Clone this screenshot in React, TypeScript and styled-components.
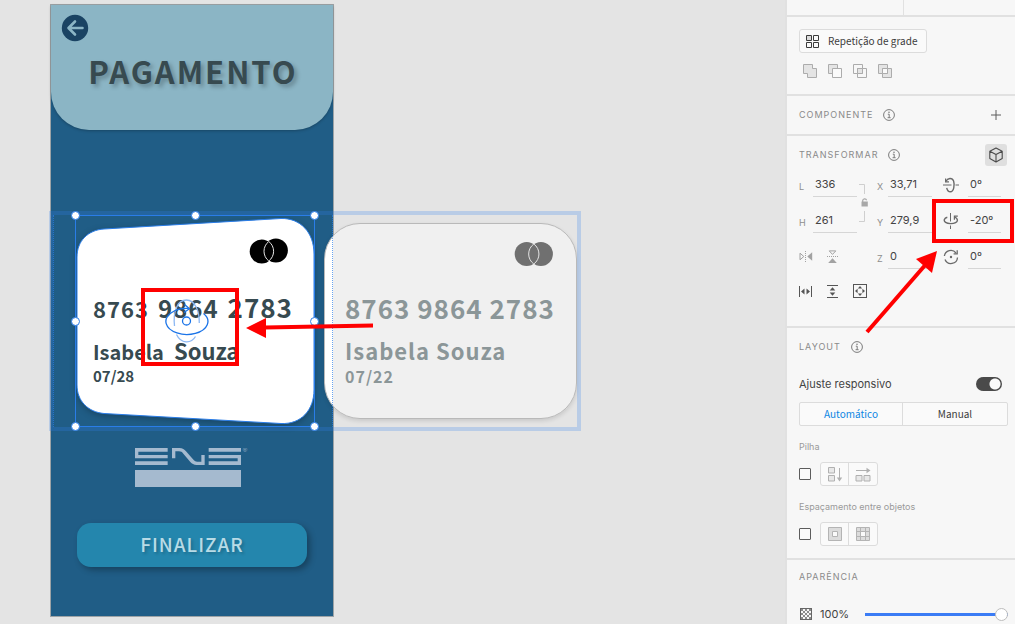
import React from "react";
import styled, { createGlobalStyle, css } from "styled-components";

const ui = `Inter, "Liberation Sans", sans-serif`;
const humanist = `"Noto Sans CJK JP", "Open Sans", sans-serif`;
const line = "#e1e1e1";
const blue = "#2a7de8";
const red = "#ff0000";

const GlobalStyle = createGlobalStyle`
  *, *::before, *::after { box-sizing: border-box; }
  body { margin: 0; font-family: ${ui}; background: #e4e4e4; }
  button, input { font: inherit; color: inherit; margin: 0; }
  button { padding: 0; cursor: pointer; }
  svg { display: block; flex: none; }
  h1, h2, p { margin: 0; }
`;

const Page = styled.div`
  display: grid;
  grid-template-columns: minmax(0, 1fr) 230px;
  height: 100vh;
  overflow: hidden;
`;

/* ---------- design canvas ---------- */

const Canvas = styled.main`
  position: relative;
  overflow: hidden;
  background: #e4e4e4;
`;

const Artboard = styled.section`
  position: absolute;
  left: 50px;
  top: 4px;
  width: 284px;
  height: 613px;
  display: flex;
  flex-direction: column;
  align-items: center;
  padding-bottom: 49px;
  background: #205d86;
  border: 1px solid #9da3a6;
`;

const ScreenHeader = styled.header`
  align-self: stretch;
  display: flex;
  flex-direction: column;
  gap: 5px;
  height: 125px;
  padding: 9px 10px;
  background: #8bb5c5;
  border-radius: 0 0 38px 38px;
  box-shadow: 0 1px 3px rgba(0, 0, 0, 0.25);
`;

const BackButton = styled.button`
  width: 28px;
  height: 28px;
  border: 0;
  background: none;
`;

const Title = styled.h1`
  align-self: center;
  padding-left: 2px;
  font: 700 31px/48px ${humanist};
  letter-spacing: 2px;
  color: #374a50;
  text-shadow: 3px 3px 4px rgba(0, 0, 0, 0.25);
`;

const LogoWrap = styled.div`
  margin-top: auto;
  padding-right: 1px;
`;

const FinishButton = styled.button`
  width: 230px;
  height: 44px;
  margin-top: 35px;
  padding-bottom: 2px;
  border: 0;
  border-radius: 14px;
  background: #2486ad;
  box-shadow: 3px 3px 6px rgba(0, 0, 0, 0.3);
  font: 500 19px/40px ${humanist};
  letter-spacing: 1px;
  color: #b8dbe6;
  text-shadow: 2px 2px 3px rgba(0, 0, 0, 0.2);
`;

const Brand = styled.div`
  align-self: flex-end;
`;

const Number = styled.p`
  display: flex;
  align-items: baseline;
  gap: 9px;
  line-height: 32px;
  letter-spacing: 1px;
`;

const Holder = styled.p`
  display: flex;
  align-items: baseline;
  gap: 10px;
  margin-top: 12px;
  line-height: 28px;
`;

const Expiry = styled.p``;

const Word = styled.span<{ $size: number }>`
  font-size: ${(p) => p.$size}px;
`;

const Card = styled.article<{ $muted?: boolean }>`
  position: absolute;
  z-index: 0;
  display: flex;
  flex-direction: column;
  align-items: flex-start;
  white-space: nowrap;
  font-family: ${humanist};
  font-weight: 700;
  ${(p) =>
    p.$muted
      ? css`
          left: 324px;
          top: 223px;
          width: 253px;
          height: 196px;
          padding: 16px 22px 0 20px;
          letter-spacing: 1px;
          color: #8b9698;
          border: 1px solid #b9b9b9;
          border-radius: 36px;
          background: linear-gradient(to right, #fff 8px, #f0f0f0 8px);
          box-shadow: 0 2px 4px rgba(0, 0, 0, 0.12);

          ${Number} { margin-top: 24px; }
          ${Expiry} { font-size: 16px; line-height: 24px; }
        `
      : css`
          left: 76px;
          top: 217px;
          width: 239px;
          height: 208px;
          padding: 20px 26px 0 17px;
          color: #374a50;

          ${Number} { margin-top: 26px; }
          ${Expiry} { font-size: 15px; line-height: 20px; }
        `}
`;

const CardShape = styled.svg`
  position: absolute;
  left: 0;
  top: 0;
  z-index: -1;
  overflow: visible;
  filter: drop-shadow(0 2px 3px rgba(0, 0, 0, 0.25));
`;

const GridFrame = styled.div`
  position: absolute;
  left: 49px;
  top: 211px;
  width: 532px;
  height: 220px;
  border: 4px solid rgba(52, 130, 238, 0.24);

  &::before {
    content: "";
    position: absolute;
    inset: 0 auto 0 0;
    width: 280px;
    border: dotted ${blue};
    border-width: 0 1px;
    opacity: 0.7;
  }
`;

const Selection = styled.div`
  position: absolute;
  left: 75px;
  top: 215px;
  width: 240px;
  height: 212px;
  border: 1px solid ${blue};
`;

const Handles = styled.div`
  position: absolute;
  inset: -5px;
  display: grid;
  grid-template-columns: repeat(3, 9px);
  justify-content: space-between;
  align-content: space-between;
`;

const Handle = styled.i<{ $hidden?: boolean }>`
  width: 9px;
  height: 9px;
  border-radius: 50%;
  border: 1px solid ${blue};
  background: #fff;
  visibility: ${(p) => (p.$hidden ? "hidden" : "visible")};
`;

const Gizmo = styled.svg`
  position: absolute;
  left: 164px;
  top: 298px;
`;

const Highlight = styled.div<{ $x: number; $y: number; $w: number; $h: number }>`
  position: absolute;
  left: ${(p) => p.$x}px;
  top: ${(p) => p.$y}px;
  width: ${(p) => p.$w}px;
  height: ${(p) => p.$h}px;
  border: 4px solid ${red};
  pointer-events: none;
`;

const Arrow = styled.svg<{ $x: number; $y: number }>`
  position: absolute;
  left: ${(p) => p.$x}px;
  top: ${(p) => p.$y}px;
  pointer-events: none;
`;

/* ---------- inspector ---------- */

const Panel = styled.aside`
  position: relative;
  background: #f7f7f7;
  border-left: 2px solid ${line};
  color: #4a4a4a;
  font-size: 11px;
`;

const TopTabs = styled.div`
  display: grid;
  grid-template-columns: 117px 1fr;
  height: 17px;
  border-bottom: 2px solid ${line};

  & > :first-child {
    border-right: 1px solid ${line};
  }
`;

const Section = styled.section<{ $pad: string }>`
  padding: ${(p) => p.$pad};
  border-bottom: 2px solid ${line};
`;

const Row = styled.div<{ $h: number; $gap?: number; $mt?: number; $indent?: number }>`
  display: flex;
  align-items: center;
  height: ${(p) => p.$h}px;
  gap: ${(p) => p.$gap ?? 0}px;
  margin-top: ${(p) => p.$mt ?? 0}px;
  padding-left: ${(p) => p.$indent ?? 0}px;
`;

const Heading = styled.h2`
  font-size: 9px;
  font-weight: 400;
  line-height: 14px;
  letter-spacing: 1px;
  color: #8a8a8a;
`;

const IconButton = styled.button<{ $active?: boolean; $end?: boolean }>`
  display: flex;
  align-items: center;
  justify-content: center;
  border: 0;
  border-radius: 3px;
  background: ${(p) => (p.$active ? "#dfdfdf" : "none")};
  ${(p) => p.$active && "width: 22px; height: 22px;"}
  ${(p) => p.$end && "margin-left: auto;"}
`;

const OutlineButton = styled.button`
  display: flex;
  align-items: center;
  gap: 9px;
  height: 24px;
  padding: 0 9px 0 6px;
  border: 1px solid #dcdcdc;
  border-radius: 3px;
  background: #fafafa;
  font: 400 10px/20px ${humanist};
  color: #3c3c3c;
`;

const Fields = styled.div`
  display: grid;
  grid-template-columns: 14px 44px 20px 11px 44px 36px 33px;
  grid-auto-rows: 25px;
  row-gap: 11px;
  align-items: center;
  margin-top: 6px;
`;

const FieldLabel = styled.label`
  padding-top: 4px;
  font-size: 9px;
  line-height: 14px;
  color: #8e8e8e;
`;

const Value = styled.input`
  width: 100%;
  min-width: 0;
  height: 25px;
  padding: 0 2px 1px;
  border: 0;
  border-bottom: 1px solid #d6d6d6;
  border-radius: 0;
  background: none;
  font-size: 11px;
  color: #444;
`;

const LockCell = styled.div`
  grid-row: 1 / span 2;
  grid-column: 3;
  padding-left: 2px;
`;

const AxisIcon = styled.div`
  display: flex;
  justify-content: center;
  padding-left: 2px;
`;

const FlipCell = styled.div`
  grid-column: 1 / span 3;
  display: flex;
  align-items: center;
  gap: 13px;
`;

const Toggle = styled.input`
  appearance: none;
  margin-left: auto;
  margin-right: 6px;
  width: 26px;
  height: 14px;
  border-radius: 7px;
  background: radial-gradient(circle at 19px 7px, #fafafa 5px, #4a4a4a 6px);
`;

const AdjustLabel = styled.label`
  font-size: 11px;
  line-height: 16px;
  color: #444;
`;

const Segments = styled.div`
  display: grid;
  grid-template-columns: 102px 1fr;
  height: 24px;
  margin-top: 10px;
  border: 1px solid #dcdcdc;
  border-radius: 2px;
  background: #fafafa;
`;

const Segment = styled.button<{ $on?: boolean }>`
  border: 0;
  background: none;
  font: 400 10px/20px ${humanist};
  color: ${(p) => (p.$on ? "#0d86e3" : "#3c3c3c")};

  & + & {
    border-left: 1px solid #dcdcdc;
  }
`;

const Caption = styled.label<{ $mt: number }>`
  display: block;
  margin-top: ${(p) => p.$mt}px;
  font-size: 9px;
  line-height: 14px;
  color: #9a9a9a;
`;

const Check = styled.input`
  appearance: none;
  width: 12px;
  height: 12px;
  border: 1px solid #5c5c5c;
  border-radius: 1px;
  background: #fafafa;
`;

const Pair = styled.div`
  display: grid;
  grid-template-columns: 27px 1fr;
  width: 58px;
  height: 24px;
  border: 1px solid #dcdcdc;
  border-radius: 3px;
  background: #fafafa;

  & > button + button {
    border-left: 1px solid #dcdcdc;
    border-radius: 0;
  }
`;

const Opacity = styled.label`
  width: 37px;
  font-size: 11px;
  line-height: 16px;
  color: #444;
`;

const Slider = styled.input`
  appearance: none;
  flex: 1;
  min-width: 0;
  height: 14px;
  background: linear-gradient(#3b7cf5, #3b7cf5) center / 100% 3px no-repeat;

  &::-webkit-slider-thumb {
    appearance: none;
    width: 13px;
    height: 13px;
    border-radius: 50%;
    border: 1px solid #bdbdbd;
    background: #fff;
  }
`;

/* ---------- drawings ---------- */

const BackIcon = () => (
  <svg width="28" height="28" viewBox="0 0 28 28" fill="none">
    <circle cx="14" cy="14" r="13.2" fill="#1a4363" />
    <path d="M14 7.5L7.5 14L14 20.5M7.8 14H21.5" stroke="#8bb5c5" strokeWidth="2.6" strokeLinecap="round" strokeLinejoin="round" />
  </svg>
);

const EnsLogo = () => (
  <svg width="113" height="40" viewBox="0 0 339 120" fill="#a5bacf">
    <path d="M0 0H98V11H10V21H98V31H0ZM0 40H98V51H0Z" />
    <path d="M111 31V0H133C143 0 148 4 153 10L174 34C178 39 181 41 187 41H199V21H209V51H185C176 51 171 47 166 42L145 17C141 12 138 10 132 10H121V31Z" />
    <path d="M221 0H318V11H221ZM221 21H318V51H221V40H308V31H221Z" />
    <path d="M0 66H318V117H0Z" />
    <text x="323" y="13" fontSize="18" fontFamily="Liberation Sans, sans-serif">®</text>
  </svg>
);

const Circles = ({ fill, ring, tilt = 0 }: { fill: string; ring: string; tilt?: number }) => (
  <svg width="40" height="28" viewBox="0 0 40 28">
    <circle cx="12.7" cy={14 + tilt} r="12" fill={fill} />
    <circle cx="26.9" cy={14 - tilt} r="12" fill={fill} />
    <path
      d={`M19.8 ${4 + tilt}A12.3 12.3 0 0 1 19.8 24A12.3 12.3 0 0 1 19.8 ${4 + tilt}Z`}
      fill="none"
      stroke={ring}
      strokeWidth="1"
    />
  </svg>
);

const InfoIcon = () => (
  <svg width="12" height="12" viewBox="0 0 12 12" fill="none" stroke="#7b7b7b">
    <circle cx="6" cy="6" r="5.4" />
    <path d="M4.8 5.2H6.2V8.6M4.6 8.7H7.6" />
    <circle cx="6" cy="3.3" r=".8" fill="#7b7b7b" stroke="none" />
  </svg>
);

const BoolIcon = ({ kind }: { kind: "add" | "sub" | "int" | "exc" }) => (
  <svg width="14" height="14" viewBox="0 0 14 14" fill="none" stroke="#acacac">
    {kind === "add" && <path d="M.5.5H9.5V4.5H13.5V13.5H4.5V9.5H.5Z" fill="#e4e4e4" />}
    {kind === "sub" && (
      <>
        <path d="M.5.5H9.5V9.5H.5Z" fill="#e4e4e4" />
        <path d="M4.5 4.5H13.5V13.5H4.5Z" fill="#fafafa" />
      </>
    )}
    {kind === "int" && (
      <>
        <path d="M.5.5H9.5V9.5H.5ZM4.5 4.5H13.5V13.5H4.5Z" />
        <path d="M4.5 4.5H9.5V9.5H4.5Z" fill="#e4e4e4" />
      </>
    )}
    {kind === "exc" && (
      <>
        <path d="M.5.5H9.5V9.5H.5ZM4.5 4.5H13.5V13.5H4.5Z" fill="#e4e4e4" />
        <path d="M4.5 4.5H9.5V9.5H4.5Z" fill="#fafafa" />
      </>
    )}
  </svg>
);

const LockIcon = () => (
  <svg width="10" height="38" viewBox="0 0 10 38" fill="none" stroke="#cfcfcf">
    <path d="M0 .5H5.5V10M5.5 27V37.5H0" />
    <path d="M3.7 18V16.6A2 2 0 0 1 7.6 16.2" stroke="#a8a8a8" strokeWidth="1.2" />
    <path d="M2.5 17.5H8.8V22.5H2.5Z" fill="#a8a8a8" stroke="none" />
  </svg>
);

const RotateX = () => (
  <svg width="16" height="16" viewBox="0 0 16 16" fill="none" stroke="#6a6a6a" strokeWidth="1.4">
    <path d="M0 8H8.5M12.500 8H16" strokeWidth="1" />
    <path d="M3 4.200C4.500 1 9.200 .2 10.600 4C11.900 8 10.800 14.800 7.400 14.800C5.400 14.800 4.300 13.400 3.700 10.800" />
    <path d="M2.600 1.400V4.800H6" strokeWidth="1.200" />
  </svg>
);

const RotateY = () => (
  <svg width="16" height="16" viewBox="0 0 16 16" fill="none" stroke="#6a6a6a" strokeWidth="1.4">
    <path d="M7.500 0V8.500M7.500 12.500V16" strokeWidth="1" />
    <path d="M4.300 4.200C1.200 5 .2 7.800 2.600 9.400C5 11 10 11 12.600 9.600C15.200 8.200 14.900 5.600 12 4.200" />
    <path d="M14.800 3.200H11.400V6.800" strokeWidth="1.200" />
  </svg>
);

const RotateZ = () => (
  <svg width="16" height="16" viewBox="0 0 16 16" fill="none" stroke="#6a6a6a" strokeWidth="1.3">
    <path d="M1.4 7A6.5 6.5 0 0 1 13 4M14.5 8.5A6.5 6.5 0 0 1 2 10.5" />
    <path d="M14.2 1.2V4.9H10.6" />
    <circle cx="8" cy="8" r="1.2" fill="#6a6a6a" stroke="none" />
  </svg>
);

const FlipH = () => (
  <svg width="14" height="14" viewBox="0 0 14 14" fill="none" stroke="#a2a2a2">
    <path d="M1 3.200V9.800L4.800 6.500Z" />
    <path d="M6.500 1V12" strokeDasharray="1 1" />
    <path d="M13.200 2.200V10.800L8.300 6.500Z" fill="#a2a2a2" stroke="none" />
  </svg>
);

const FlipV = () => (
  <svg width="14" height="14" viewBox="0 0 14 14" fill="none" stroke="#a2a2a2">
    <path d="M3.200 .9H9.800L6.500 4.400Z" />
    <path d="M1 6.500H12" strokeDasharray="1 1" />
    <path d="M2.200 13H10.800L6.500 8.200Z" fill="#a2a2a2" stroke="none" />
  </svg>
);

const FixWidth = () => (
  <svg width="14" height="14" viewBox="0 0 14 14" fill="#555">
    <path d="M0 2H1V13H0ZM12 2H13V13H12ZM5.5 4.5V10.5L2 7.5ZM7.5 4.5V10.5L11 7.5Z" />
  </svg>
);

const FixHeight = () => (
  <svg width="14" height="14" viewBox="0 0 14 14" fill="#555">
    <path d="M1 1H12V2H1ZM1 13H12V14H1ZM3.7 6.500H9.3L6.5 3.300ZM3.7 8.500H9.3L6.5 11.700Z" />
  </svg>
);

const FixBoth = () => (
  <svg width="14" height="14" viewBox="0 0 14 14" fill="#555">
    <path d="M1 1V13H13V1ZM0 0H14V14H0Z" fillRule="evenodd" />
    <path d="M4.8 4.6H9.2L7 2ZM4.8 9.4H9.2L7 12ZM4.6 4.8V9.2L2 7ZM9.4 4.8V9.2L12 7Z" />
  </svg>
);

const StackV = () => (
  <svg width="16" height="16" viewBox="0 0 16 16" fill="#e8e8e8" stroke="#b0b0b0">
    <path d="M1.5 1.5H7.5V7H1.5ZM1.5 9.5H7.5V15H1.5Z" />
    <path d="M12.5 2V13" />
    <path d="M9.8 11.5H15.2L12.5 15.5Z" fill="#b0b0b0" stroke="none" />
  </svg>
);

const StackH = () => (
  <svg width="16" height="16" viewBox="0 0 16 16" fill="#e8e8e8" stroke="#b0b0b0">
    <path d="M1 9.5H7V15H1ZM9 9.5H15V15H9Z" />
    <path d="M1 4.5H12" />
    <path d="M11.5 1.8V7.2L15.5 4.5Z" fill="#b0b0b0" stroke="none" />
  </svg>
);

const PadAll = () => (
  <svg width="14" height="14" viewBox="0 0 14 14" fill="#dcdcdc" stroke="#b4b4b4">
    <path d="M.5.5H13.5V13.5H.5Z" />
    <path d="M4.5 4.5H9.5V9.5H4.5Z" fill="#fafafa" />
  </svg>
);

const PadEach = () => (
  <svg width="14" height="14" viewBox="0 0 14 14" fill="#dcdcdc" stroke="#b4b4b4">
    <path d="M.5.5H13.5V13.5H.5Z" />
    <path d="M4.5 4.5H9.5V9.5H4.5Z" fill="#fafafa" />
    <path d="M4.5.5V13.5M9.5.5V13.5M.5 4.5H13.5M.5 9.5H13.5" />
  </svg>
);

const Checker = () => (
  <svg width="12" height="12" viewBox="0 0 12 12" fill="#8c8c8c">
    {Array.from({ length: 25 }, (_, i) => i)
      .filter((i) => i % 2 === 0)
      .map((i) => (
        <rect key={i} x={1 + (i % 5) * 2} y={1 + Math.floor(i / 5) * 2} width="2" height="2" />
      ))}
    <rect x=".5" y=".5" width="11" height="11" fill="none" stroke="#666" />
  </svg>
);

const GridIcon = () => (
  <svg width="13" height="13" viewBox="0 0 13 13" fill="none" stroke="#3c3c3c">
    <path d="M.5.5H5.5V5.5H.5Z" fill="#dcdcdc" />
    <path d="M7.5.5H12.5V5.5H7.5ZM.5 7.5H5.5V12.5H.5ZM7.5 7.5H12.5V12.5H7.5Z" />
  </svg>
);

const CubeIcon = () => (
  <svg width="16" height="16" viewBox="0 0 16 16" fill="none" stroke="#4a4a4a" strokeWidth="1.1" strokeLinejoin="round">
    <path d="M8 1L14.2 4.2V11.6L8 15L1.8 11.6V4.2ZM1.8 4.2L8 7.6L14.2 4.2M8 7.6V15" />
  </svg>
);

const PlusIcon = () => (
  <svg width="10" height="10" viewBox="0 0 10 10" stroke="#5c5c5c">
    <path d="M0 5H10M5 0V10" />
  </svg>
);

const Field = ({ name, id, value }: { name: string; id: string; value: string }) => (
  <>
    <FieldLabel htmlFor={id}>{name}</FieldLabel>
    <Value id={id} defaultValue={value} />
  </>
);

export default function App() {
  return (
    <>
      <GlobalStyle />
      <Page>
        <Canvas>
          <Artboard>
            <ScreenHeader>
              <BackButton aria-label="Voltar">
                <BackIcon />
              </BackButton>
              <Title>PAGAMENTO</Title>
            </ScreenHeader>
            <LogoWrap>
              <EnsLogo />
            </LogoWrap>
            <FinishButton>FINALIZAR</FinishButton>
          </Artboard>

          <Card $muted>
            <Brand>
              <Circles fill="#707070" ring="#e4e4e4" />
            </Brand>
            <Number>
              <Word $size={26}>8763 9864 2783</Word>
            </Number>
            <Holder>
              <Word $size={22}>Isabela Souza</Word>
            </Holder>
            <Expiry>07/22</Expiry>
          </Card>

          <Card>
            <CardShape width="239" height="208" viewBox="76 217 239 208">
              <path
                d="M77 257C77 241 88 230 104 229L281 218.500C300 218 314 232 314 254V390C314 410 301 424.500 281 423.500L104 413.500C88 412 77 401 77 385Z"
                fill="#fff"
                stroke={blue}
              />
            </CardShape>
            <Brand>
              <Circles fill="#000" ring="#e4e4e4" tilt={0.5} />
            </Brand>
            <Number>
              <Word $size={22}>8763</Word>
              <Word $size={24}>9864</Word>
              <Word $size={26}>2783</Word>
            </Number>
            <Holder>
              <Word $size={20}>Isabela</Word>
              <Word $size={22}>Souza</Word>
            </Holder>
            <Expiry>07/28</Expiry>
          </Card>

          <GridFrame />
          <Selection>
            <Handles>
              {Array.from({ length: 9 }, (_, i) => (
                <Handle key={i} $hidden={i === 4} />
              ))}
            </Handles>
          </Selection>
          <Gizmo width="46" height="46" viewBox="0 0 46 46" fill="none" stroke="#1b74e8" strokeWidth="1.3">
            <g stroke="#8db8f3">
              <path d="M10.500 28C9 14 13 2 22.500 2C31 2 35.500 13 35.300 25" />
              <path d="M12.500 36.500C17 46 27 46 31.500 38.500" />
            </g>
            <path d="M39.500 15.500A21 13 0 1 1 24.500 10.500" />
            <path d="M20.500 6.500L25.500 10.700L20 14.500" />
            <circle cx="22.500" cy="23" r="4" />
          </Gizmo>
          <Highlight $x={141} $y={288} $w={98} $h={78} />
          <Arrow $x={246} $y={316} width="128" height="24" viewBox="0 0 128 24">
            <path d="M19 11.500L127 9.500" stroke={red} strokeWidth="4" />
            <path d="M0 12L20 2V22Z" fill={red} />
          </Arrow>
        </Canvas>

        <Panel>
          <TopTabs>
            <span />
            <span />
          </TopTabs>

          <Section $pad="12px 12px 16px">
            <OutlineButton>
              <GridIcon />
              Repetição de grade
            </OutlineButton>
            <Row $h={14} $gap={11} $mt={11} $indent={4}>
              <IconButton aria-label="Adicionar">
                <BoolIcon kind="add" />
              </IconButton>
              <IconButton aria-label="Subtrair">
                <BoolIcon kind="sub" />
              </IconButton>
              <IconButton aria-label="Interseção">
                <BoolIcon kind="int" />
              </IconButton>
              <IconButton aria-label="Excluir sobreposição">
                <BoolIcon kind="exc" />
              </IconButton>
            </Row>
          </Section>

          <Section $pad="8px 14px 8px 12px">
            <Row $h={22} $gap={10}>
              <Heading>COMPONENTE</Heading>
              <InfoIcon />
              <IconButton $end aria-label="Novo componente">
                <PlusIcon />
              </IconButton>
            </Row>
          </Section>

          <Section $pad="8px 8px 28px 12px">
            <Row $h={22} $gap={10}>
              <Heading>TRANSFORMAR</Heading>
              <InfoIcon />
              <IconButton $active $end aria-label="Transformação 3D">
                <CubeIcon />
              </IconButton>
            </Row>
            <Fields>
              <Field name="L" id="w" value="336" />
              <LockCell>
                <LockIcon />
              </LockCell>
              <Field name="X" id="x" value="33,71" />
              <AxisIcon>
                <RotateX />
              </AxisIcon>
              <Value aria-label="Rotação X" defaultValue="0º" />

              <Field name="H" id="h" value="261" />
              <Field name="Y" id="y" value="279,9" />
              <AxisIcon>
                <RotateY />
              </AxisIcon>
              <Value aria-label="Rotação Y" defaultValue="-20º" />

              <FlipCell>
                <FlipH />
                <FlipV />
              </FlipCell>
              <Field name="Z" id="z" value="0" />
              <AxisIcon>
                <RotateZ />
              </AxisIcon>
              <Value aria-label="Rotação Z" defaultValue="0º" />
            </Fields>
            <Row $h={14} $gap={13} $mt={15}>
              <FixWidth />
              <FixHeight />
              <FixBoth />
            </Row>
          </Section>

          <Section $pad="8px 7px 12px 12px">
            <Row $h={22} $gap={10}>
              <Heading>LAYOUT</Heading>
              <InfoIcon />
            </Row>
            <Row $h={16} $mt={18}>
              <AdjustLabel htmlFor="responsive">Ajuste responsivo</AdjustLabel>
              <Toggle id="responsive" type="checkbox" role="switch" defaultChecked />
            </Row>
            <Segments>
              <Segment $on>Automático</Segment>
              <Segment>Manual</Segment>
            </Segments>
            <Caption htmlFor="stack" $mt={14}>
              Pilha
            </Caption>
            <Row $h={24} $gap={9} $mt={8}>
              <Check id="stack" type="checkbox" />
              <Pair>
                <IconButton aria-label="Vertical">
                  <StackV />
                </IconButton>
                <IconButton aria-label="Horizontal">
                  <StackH />
                </IconButton>
              </Pair>
            </Row>
            <Caption htmlFor="padding" $mt={14}>
              Espaçamento entre objetos
            </Caption>
            <Row $h={24} $gap={9} $mt={8}>
              <Check id="padding" type="checkbox" />
              <Pair>
                <IconButton aria-label="Mesmo valor">
                  <PadAll />
                </IconButton>
                <IconButton aria-label="Valores por lado">
                  <PadEach />
                </IconButton>
              </Pair>
            </Row>
          </Section>

          <Section $pad="10px 7px 10px 12px">
            <Heading>APARÊNCIA</Heading>
            <Row $h={16} $gap={8} $mt={22} $indent={1}>
              <Checker />
              <Opacity htmlFor="opacity">100%</Opacity>
              <Slider id="opacity" type="range" min="0" max="100" defaultValue="100" />
            </Row>
          </Section>

          <Highlight $x={145} $y={199} $w={82} $h={44} />
          <Arrow $x={78} $y={250} width="74" height="86" viewBox="0 0 74 86">
            <path d="M2 82L62 13" stroke={red} strokeWidth="4" />
            <path d="M72 1L51 9L67 23Z" fill={red} />
          </Arrow>
        </Panel>
      </Page>
    </>
  );
}
